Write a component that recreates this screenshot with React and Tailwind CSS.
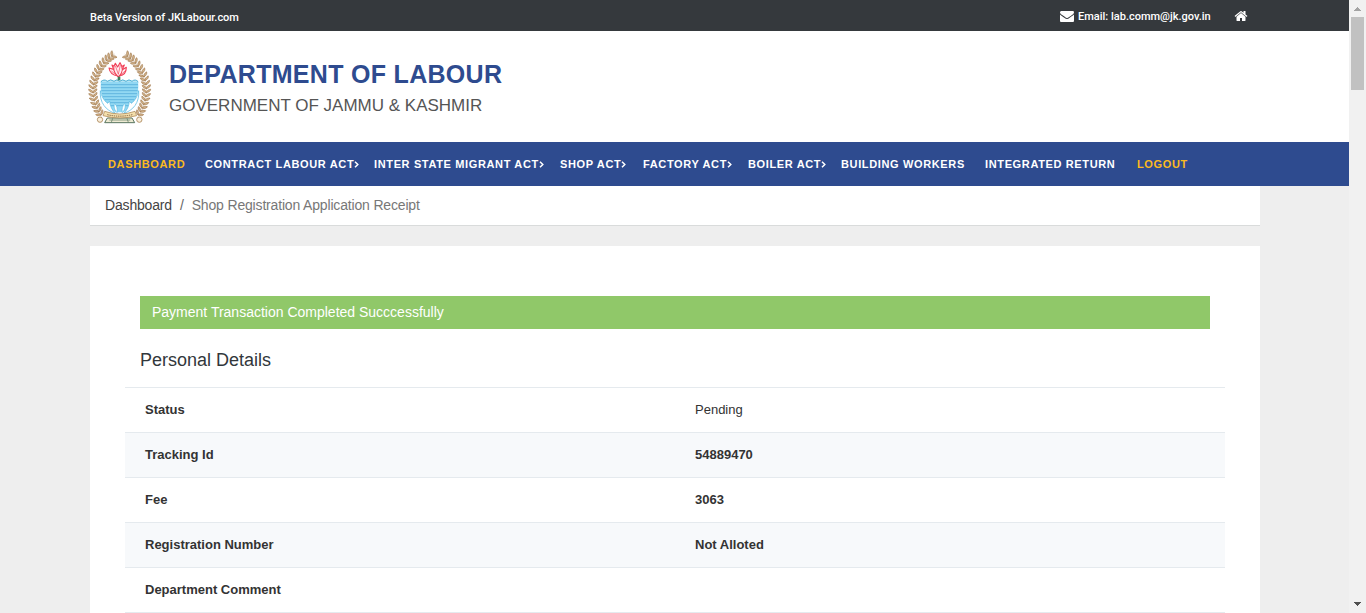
const NAV = [
  { label: "DASHBOARD", box: "w-[97px]", accent: true },
  { label: "CONTRACT LABOUR ACT", box: "w-[169px]", sub: true },
  { label: "INTER STATE MIGRANT ACT", box: "w-[186px]", sub: true },
  { label: "SHOP ACT", box: "w-[83px]", sub: true },
  { label: "FACTORY ACT", box: "w-[105px]", sub: true },
  { label: "BOILER ACT", box: "w-[93px]", sub: true },
  { label: "BUILDING WORKERS", box: "w-[144px]" },
  { label: "INTEGRATED RETURN", box: "w-[152px]" },
  { label: "LOGOUT", box: "w-[60px]", accent: true },
];

const ROWS = [
  { label: "Status", value: "Pending", plain: true },
  { label: "Tracking Id", value: "54889470" },
  { label: "Fee", value: "3063" },
  { label: "Registration Number", value: "Not Alloted" },
  { label: "Department Comment", value: "" },
];

// Stem points and heading angles of the left wreath branch.
const LEAVES = [
  [99, 46, 52], [90, 52, 48], [82, 58, 46], [74, 66, 42], [66, 75, 38], [59, 85, 33],
  [53, 95, 28], [48, 106, 22], [44, 117, 16], [41, 129, 10], [39, 141, 4], [39, 153, -2],
  [40, 165, -8], [42, 177, -13], [46, 189, -19], [50, 200, -25], [55, 211, -30], [61, 221, -36],
];

function Branch() {
  return (
    <g>
      <path
        d="M104 42C70 60 39 105 39 150C39 185 50 210 64 230"
        fill="none"
        stroke="#c3a27c"
        strokeWidth="1.5"
      />
      {LEAVES.map(([x, y, r], i) => (
        <g key={i} transform={`translate(${x} ${y}) rotate(${r})`} fill="#d4b48c" stroke="#966c3e" strokeWidth="1.6">
          <path d="M0 5C-8 4-13-1-13-6C-6-5-1-1 0 5Z" />
          <path d="M0 5C8 4 12-1 12-6C5-5 1-1 0 5Z" />
        </g>
      ))}
    </g>
  );
}

function Emblem() {
  return (
    <svg className="h-[77px] w-[70px] shrink-0" viewBox="24 27 210 231" aria-hidden="true">
      <Branch />
      <g transform="translate(238 0) scale(-1 1)">
        <Branch />
      </g>
      <path d="M63 122C58 165 72 199 108 217H130C164 199 179 165 174 122Z" fill="#92d8f3" />
      <path
        d="M62 126Q72 115 82 124Q92 115 102 124Q111 115 119 124Q128 115 138 124Q147 115 156 124Q166 115 175 126"
        fill="#b5e3f4"
        stroke="#3ba5cb"
        strokeWidth="2.5"
      />
      <path
        d="M63 134H174M63 143H174M64 152H173M66 161H171M69 170H168M74 179H163M82 188H155M92 197H145"
        stroke="#55addb"
        strokeWidth="2.4"
        fill="none"
      />
      <path d="M61 152C58 188 78 212 106 220C96 210 90 197 89 183L83 190C71 181 64 168 61 152ZM176 152C179 188 159 212 131 220C142 210 147 197 148 183L154 190C166 181 173 168 176 152Z" fill="#fff" stroke="#62bfe4" strokeWidth="2.4" />
      <path d="M104 190C100 200 104 211 111 218C114 206 110 197 104 190ZM134 190C138 200 134 211 127 218C124 206 128 197 134 190Z" fill="#fff" stroke="#62bfe4" strokeWidth="2" />
      <g fill="#fff0f3" stroke="#f04058" strokeWidth="3.4" strokeLinejoin="round">
        <path d="M114 108C98 106 89 98 87 84L101 88L96 75C107 78 112 91 114 108ZM118 108C134 106 139 97 139 82L126 90L133 75C122 79 117 91 118 108Z" />
        <path d="M113 109C98 93 99 80 106 70L113 81L120 68C130 82 128 98 117 109Z" />
        <path d="M106 77L115 103L121 75M94 93L110 106M136 92L121 106" fill="none" strokeWidth="2" />
      </g>
      <path d="M113 110H121V121H113Z" fill="#3f7f5d" />
      <g stroke="#58755f" strokeWidth="3" fill="#eeead2">
        <path d="M82 234H156L164 248H74Z" />
        <path d="M98 235L94 247M141 235L145 247M88 240H151" fill="none" strokeWidth="2" />
      </g>
      <path d="M74 214Q119 230 165 214L170 227Q120 241 69 227Z" fill="#f4dfac" stroke="#a17c4a" strokeWidth="2" />
      <path d="M82 224Q119 233 157 224" fill="none" stroke="#80613d" strokeWidth="3" strokeDasharray="4 2.5" />
      <g fill="#f9eedc" stroke="#b7976d" strokeWidth="3">
        <circle cx="60" cy="239" r="8" />
        <circle cx="178" cy="239" r="8" />
      </g>
    </svg>
  );
}

function Envelope() {
  return (
    <svg className="mr-1 mb-[2px] h-[14px] w-[14px]" viewBox="0 0 1792 1792" fill="currentColor" aria-hidden="true">
      <path d="M1792 710v794q0 66-47 113t-113 47h-1472q-66 0-113-47t-47-113v-794q44 49 101 87 362 246 497 345 57 42 92.5 65.5t94.5 48 110 24.5h2q51 0 110-24.5t94.5-48 92.5-65.5q170-123 498-345 57-39 100-87zm0-294q0 79-49 151t-122 123q-376 261-468 325-10 7-42.5 31t-54 38.5-52 32.5-57.5 27-50 9h-2q-23 0-50-9t-57.5-27-52-32.5-54-38.5-42.5-31q-91-64-262-182.5t-205-142.5q-62-42-117-115.5t-55-136.5q0-78 41.5-130t118.5-52h1472q65 0 112.5 47t47.5 113z" />
    </svg>
  );
}

function Home() {
  return (
    <svg className="mb-px h-[14px] w-[14px]" viewBox="0 0 1792 1792" fill="currentColor" aria-hidden="true">
      <path d="M1472 992v480q0 26-19 45t-45 19h-384v-384h-256v384h-384q-26 0-45-19t-19-45v-480q0-1 .5-3t.5-3l575-474 575 474q1 2 1 6zm223-69l-62 74q-8 9-21 11h-3q-13 0-21-7l-692-577-692 577q-12 8-24 7-13-2-21-11l-62-74q-8-10-7-23.5t11-21.5l719-599q32-26 76-26t76 26l244 204v-195q0-14 9-23t23-9h192q14 0 23 9t9 23v408l219 182q10 8 11 21.5t-7 23.5z" />
    </svg>
  );
}

function Caret() {
  return (
    <svg className="h-[7px] w-[5px]" viewBox="0 0 5 7" fill="none" aria-hidden="true">
      <path d="M1 .8L3.8 3.5L1 6.2" stroke="#fff" strokeWidth="1.5" />
    </svg>
  );
}

function Scrollbar() {
  return (
    <div className="flex h-full w-[17px] shrink-0 flex-col items-center justify-between bg-[#f1f1f1]">
      <div className="flex flex-col items-center">
        <svg className="h-[17px] w-[17px]" viewBox="0 0 17 17" shapeRendering="crispEdges">
          <path d="M8 7h1v1h1v1h1v1h1v1H5v-1h1V9h1V8h1z" fill="#a3a3a3" />
        </svg>
        <div className="h-[73px] w-[13px] bg-[#c1c1c1]" />
      </div>
      <svg className="h-[17px] w-[17px]" viewBox="0 0 17 17" shapeRendering="crispEdges">
        <path d="M5 6h7v1h-1v1h-1v1H9v1H8V9H7V8H6V7H5z" fill="#505050" />
      </svg>
    </div>
  );
}

export default function App() {
  return (
    <div className="flex h-[613px] w-[1366px] overflow-hidden font-['Liberation_Sans',Arial,sans-serif] text-[#333]">
      <div className="flex h-full w-[1349px] flex-col overflow-hidden bg-[#eee]">
        <div className="flex h-[31px] shrink-0 items-center bg-[#35393d] px-[90px] pt-[2px] font-['Roboto',sans-serif] text-[11px] font-medium text-white">
          <span className="w-[970px] pt-[3px] tracking-[-0.02px]">Beta Version of JKLabour.com</span>
          <Envelope />
          <span className="w-[156px] pt-[2px] whitespace-nowrap">Email: lab.comm@jk.gov.in</span>
          <Home />
        </div>

        <header className="flex h-[111px] shrink-0 bg-white pt-[18px] pl-[88px]">
          <Emblem />
          <div className="pt-[9px] pl-[11px]">
            <h1 className="text-[25px] leading-8 font-bold tracking-[0.3px] whitespace-nowrap text-[#2e4b8f]">DEPARTMENT OF LABOUR</h1>
            <p className="text-[17px] leading-8 whitespace-nowrap text-[#555]">GOVERNMENT OF JAMMU &amp; KASHMIR</p>
          </div>
        </header>

        <nav className="flex h-11 shrink-0 items-center bg-[#2e4b8f] pl-[108px] text-[11px] font-bold tracking-[0.64px] whitespace-nowrap text-white">
          {NAV.map((n) => (
            <a key={n.label} className={`flex shrink-0 items-center ${n.box} ${n.accent ? "text-[#fbba20]" : ""}`}>
              {n.label}
              {n.sub && <Caret />}
            </a>
          ))}
        </nav>

        <div className="ml-[90px] flex h-10 w-[1170px] shrink-0 items-center border-b border-[#d9dbdb] bg-white px-[15px] text-[14px] tracking-[-0.17px]">
          <span className="text-[#444]">Dashboard</span>
          <span className="px-2 text-[#666]">/</span>
          <span className="text-[#777]">Shop Registration Application Receipt</span>
        </div>

        <main className="mt-5 ml-[90px] h-[420px] w-[1170px] shrink-0 bg-white px-[35px] pt-[50px]">
          <div className="mx-[15px] flex h-[33px] items-center bg-[#90c869] px-3 text-[14px] text-white">
            Payment Transaction Completed Succcessfully
          </div>
          <h2 className="mx-[15px] flex h-[58px] items-center pt-1 text-[18px] text-[#32373b]">Personal Details</h2>
          <div>
            {ROWS.map((r) => (
              <div key={r.label} className="flex h-[45px] items-center border-t border-[#e5eaee] px-5 text-[13px] even:bg-[#f7f9fb]">
                <span className="w-[550px] font-bold">{r.label}</span>
                <span className={r.plain ? "" : "font-bold"}>{r.value}</span>
              </div>
            ))}
            <div className="h-px bg-[#e5eaee]" />
          </div>
        </main>
      </div>
      <Scrollbar />
    </div>
  );
}
